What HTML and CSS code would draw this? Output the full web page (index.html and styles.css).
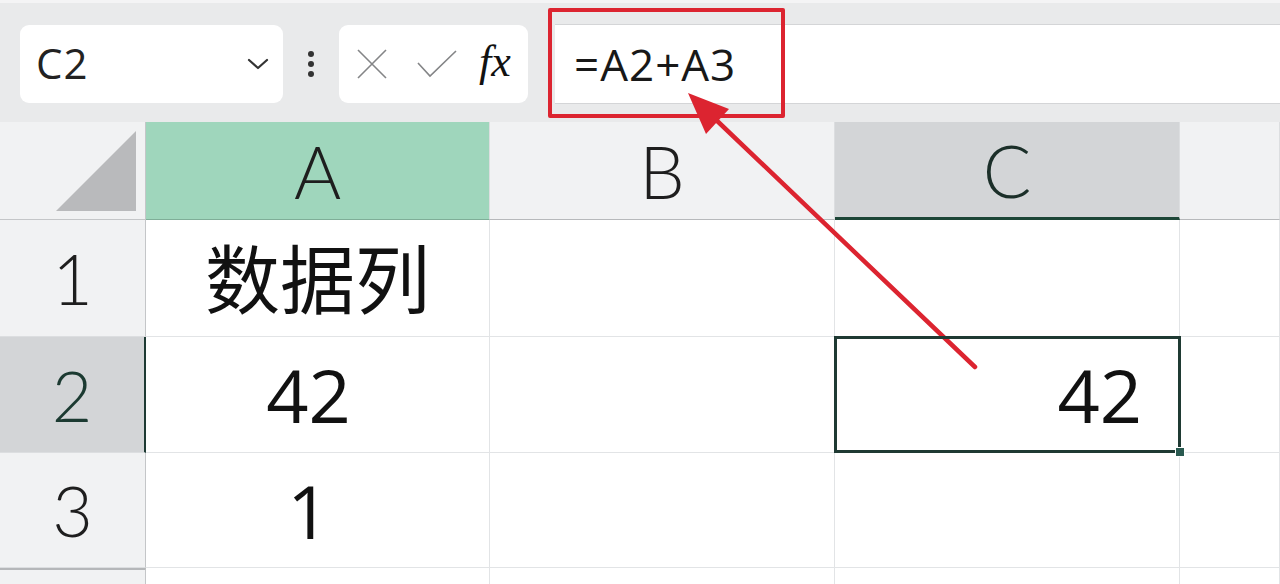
FILE: index.html
```html
<!DOCTYPE html>
<html lang="zh-CN">
<head>
  <meta charset="UTF-8" />
  <meta name="viewport" content="width=device-width, initial-scale=1.0" />
  <title>Formula bar</title>
  <link rel="stylesheet" href="styles.css">
</head>
<body>
  <div class="toolbar">
    <div class="name-box">
      <span>C2</span>
      <svg class="chevron" width="24" height="14" viewBox="0 0 24 14"><path d="M3 3 L12 11 L21 3" fill="none" stroke="#333" stroke-width="2.2" stroke-linecap="round" stroke-linejoin="round"/></svg>
    </div>
    <div class="dots"><i></i><i></i><i></i></div>
    <div class="btn-group">
      <svg class="icon-x" width="30" height="30" viewBox="0 0 30 30"><path d="M1 1 L29 29 M29 1 L1 29" stroke="#848587" stroke-width="1.6" fill="none"/></svg>
      <svg class="icon-check" width="40" height="28" viewBox="0 0 40 28"><path d="M1 13 L13 26 L39 1" stroke="#848587" stroke-width="1.6" fill="none"/></svg>
      <span class="fx">fx</span>
    </div>
    <div class="formula">=A2+A3</div>
  </div>

  <div class="sheet">
    <div class="corner">
      <svg width="82" height="82" viewBox="0 0 82 82"><polygon points="1,81 81,81 81,1" fill="#b9babc"/></svg>
    </div>
    <div class="col-head active-col">A</div>
    <div class="col-head">B</div>
    <div class="col-head sel-col">C</div>
    <div class="col-head"></div>

    <div class="row-head">1</div>
    <div class="cell center cjk">数据列</div>
    <div class="cell"></div>
    <div class="cell"></div>
    <div class="cell"></div>

    <div class="row-head sel-row">2</div>
    <div class="cell center num">42</div>
    <div class="cell"></div>
    <div class="cell right selected">42<span class="handle"></span></div>
    <div class="cell"></div>

    <div class="row-head">3</div>
    <div class="cell center num">1</div>
    <div class="cell"></div>
    <div class="cell"></div>
    <div class="cell"></div>

    <div class="row-head last"></div>
    <div class="cell"></div>
    <div class="cell"></div>
    <div class="cell"></div>
    <div class="cell"></div>
  </div>

  <div class="highlight"></div>
  <svg class="arrow" width="1280" height="584" viewBox="0 0 1280 584">
    <line x1="975" y1="367" x2="712" y2="116" stroke="#dc2430" stroke-width="4.5" stroke-linecap="round"/>
    <polygon points="688,93 729,109 706,134" fill="#dc2430"/>
  </svg>
</body>
</html>
```

FILE: styles.css
```css
* {
  box-sizing: border-box;
  margin: 0;
  padding: 0;
}

body {
  width: 1280px;
  height: 584px;
  overflow: hidden;
  background: #fff;
  font-family: 'Open Sans', 'Noto Sans', sans-serif;
  color: #151515;
  position: relative;
}

.toolbar {
  height: 122px;
  background: #e9eaeb;
  border-top: 3px solid #f4f4f5;
  display: flex;
  align-items: center;
  padding-top: 2px;
}

.name-box {
  margin-left: 20px;
  width: 263px;
  height: 78px;
  background: #fff;
  border-radius: 9px;
  display: flex;
  align-items: center;
  justify-content: space-between;
  padding: 0 13px 0 16px;
  font-size: 42px;
  letter-spacing: 1px;
  color: #222;
}

.name-box span {
  line-height: 1;
  margin-top: -2px;
}

.dots {
  width: 56px;
  display: flex;
  flex-direction: column;
  align-items: center;
  gap: 4px;
}

.dots i {
  width: 6px;
  height: 6px;
  border-radius: 50%;
  background: #333;
}

.btn-group {
  width: 189px;
  height: 78px;
  background: #fff;
  border-radius: 9px;
  display: flex;
  align-items: center;
  padding-left: 18px;
}

.icon-check {
  margin-left: 30px;
}

.fx {
  margin-left: 22px;
  font-family: 'Liberation Serif', serif;
  font-style: italic;
  font-size: 44px;
  color: #111;
  line-height: 1;
  margin-top: -4px;
}

.formula {
  margin-left: 27px;
  flex: 1;
  height: 80px;
  background: #fff;
  border-top: 1px solid #d4d5d7;
  border-bottom: 1px solid #d4d5d7;
  display: flex;
  align-items: center;
  padding-left: 19px;
  font-size: 44px;
  letter-spacing: 1px;
  color: #181818;
}

.sheet {
  display: grid;
  grid-template-columns: 146px 344px 345px 345px 1fr;
  grid-template-rows: 98px 117px 116px 115px 40px;
}

.corner {
  background: #f1f2f3;
  border-bottom: 1px solid #c4c6c8;
  border-right: 1px solid #c4c6c8;
  display: flex;
  align-items: flex-end;
  justify-content: flex-end;
  padding: 0 8px 7px 0;
}

.col-head {
  background: #f1f2f3;
  border-bottom: 1px solid #b7b9bb;
  border-right: 1px solid #dcdee0;
  display: flex;
  align-items: center;
  justify-content: center;
  font-family: 'Lato', sans-serif;
  font-weight: 300;
  font-size: 72px;
  color: #1e1e1e;
}

.active-col {
  background: #9fd6bc;
  border-bottom-color: #7fae98;
}

.sel-col {
  background: #d3d5d7;
  border-bottom: 3px solid #1d4637;
  color: #1b2f29;
}

.row-head {
  background: #f1f2f3;
  border-right: 1px solid #c4c6c8;
  border-bottom: 1px solid #dcdee0;
  display: flex;
  align-items: center;
  justify-content: center;
  font-family: 'Lato', sans-serif;
  font-weight: 300;
  font-size: 70px;
  color: #1e1e1e;
}

.sel-row {
  background: #d3d5d7;
  border-right: 2px solid #1d3a33;
  color: #1b3a31;
}

.row-head.last {
  border-top: 2px solid #b5b7b9;
}

.cell {
  border-right: 1px solid #e2e4e6;
  border-bottom: 1px solid #e2e4e6;
  display: flex;
  align-items: center;
  font-size: 74px;
  color: #111;
  position: relative;
}

.center {
  justify-content: center;
}

.num {
  padding-right: 18px;
}

.right {
  justify-content: flex-end;
  padding-right: 36px;
}

.cjk {
  font-family: 'Noto Sans CJK SC', sans-serif;
  font-size: 75px;
  padding-bottom: 6px;
}

.selected {
  margin: -1px -1px 0 -1px;
  border: 3px solid #1f3a33;
  z-index: 2;
}

.handle {
  position: absolute;
  right: -7px;
  bottom: -7px;
  width: 10px;
  height: 10px;
  background: #2a5a50;
  border: 1px solid #fff;
}

.highlight {
  position: absolute;
  left: 548px;
  top: 8px;
  width: 237px;
  height: 110px;
  border: 4px solid #dc2430;
  border-radius: 2px;
}

.arrow {
  position: absolute;
  left: 0;
  top: 0;
  pointer-events: none;
}
```
